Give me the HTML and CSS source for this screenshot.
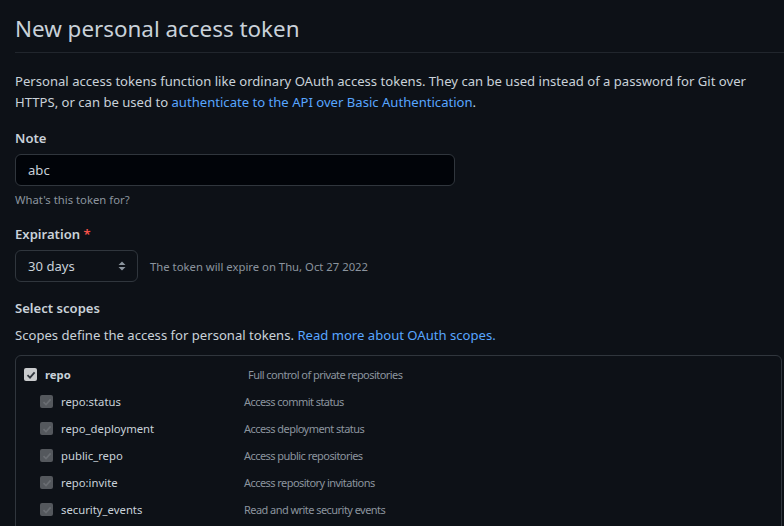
FILE: index.html
```html
<!DOCTYPE html>
<html>
<head>
<meta charset="utf-8">
<link rel="stylesheet" href="styles.css">
</head>
<body>
<div class="page">
  <h1 class="title">New personal access token</h1>
  <p class="intro">Personal access tokens function like ordinary OAuth access tokens. They can be used instead of a password for Git over HTTPS, or can be used to <a class="link">authenticate to the API over Basic Authentication</a>.</p>

  <div class="field">
    <div class="label">Note</div>
    <div class="input">abc</div>
    <div class="note">What's this token for?</div>
  </div>

  <div class="field field-exp">
    <div class="label">Expiration <span class="req">*</span></div>
    <div class="exp-row">
      <div class="select">
        <span>30 days</span>
        <svg class="updown" width="8" height="12" viewBox="0 0 8 12"><path d="M4 1.5 L7.5 5 H0.5 Z M4 10.5 L7.5 7 H0.5 Z" fill="#8b949e"/></svg>
      </div>
      <span class="exp-note">The token will expire on Thu, Oct 27 2022</span>
    </div>
  </div>

  <div class="label label-scopes">Select scopes</div>
  <p class="scopes-desc">Scopes define the access for personal tokens. <a class="link">Read more about OAuth scopes.</a></p>

  <div class="scopes">
    <div class="row row-top">
      <div class="name"><span class="cb cb-on"><svg width="10" height="10" viewBox="0 0 10 10"><path d="M1.5 5.2 L4 7.6 L8.6 2.4" fill="none" stroke="#30363d" stroke-width="1.8"/></svg></span><b>repo</b></div>
      <div class="desc">Full control of private repositories</div>
    </div>
    <div class="row row-sub">
      <div class="name"><span class="cb cb-dis"><svg width="10" height="10" viewBox="0 0 10 10"><path d="M1.5 5.2 L4 7.6 L8.6 2.4" fill="none" stroke="#6a6e73" stroke-width="1.6"/></svg></span>repo:status</div>
      <div class="desc">Access commit status</div>
    </div>
    <div class="row row-sub">
      <div class="name"><span class="cb cb-dis"><svg width="10" height="10" viewBox="0 0 10 10"><path d="M1.5 5.2 L4 7.6 L8.6 2.4" fill="none" stroke="#6a6e73" stroke-width="1.6"/></svg></span>repo_deployment</div>
      <div class="desc">Access deployment status</div>
    </div>
    <div class="row row-sub">
      <div class="name"><span class="cb cb-dis"><svg width="10" height="10" viewBox="0 0 10 10"><path d="M1.5 5.2 L4 7.6 L8.6 2.4" fill="none" stroke="#6a6e73" stroke-width="1.6"/></svg></span>public_repo</div>
      <div class="desc">Access public repositories</div>
    </div>
    <div class="row row-sub">
      <div class="name"><span class="cb cb-dis"><svg width="10" height="10" viewBox="0 0 10 10"><path d="M1.5 5.2 L4 7.6 L8.6 2.4" fill="none" stroke="#6a6e73" stroke-width="1.6"/></svg></span>repo:invite</div>
      <div class="desc">Access repository invitations</div>
    </div>
    <div class="row row-sub">
      <div class="name"><span class="cb cb-dis"><svg width="10" height="10" viewBox="0 0 10 10"><path d="M1.5 5.2 L4 7.6 L8.6 2.4" fill="none" stroke="#6a6e73" stroke-width="1.6"/></svg></span>security_events</div>
      <div class="desc">Read and write security events</div>
    </div>
  </div>
</div>
</body>
</html>
```
FILE: styles.css
```css
html, body {
  margin: 0;
  padding: 0;
  background: #0d1117;
  height: 100%;
  overflow: hidden;
}
body {
  font-family: "Noto Sans", "Liberation Sans", sans-serif;
  color: #c9d1d9;
  font-size: 13.1px;
}
.page {
  padding: 0 0 0 15px;
}
.title {
  margin: 0;
  padding-top: 13px;
  padding-bottom: 7px;
  font-size: 22.4px;
  font-weight: 400;
  line-height: 32px;
  border-bottom: 1px solid #21262d;
}
.intro {
  margin: 18px 30px 0 0;
  line-height: 21px;
}
.link {
  color: #58a6ff;
}
.field {
  margin-top: 15px;
}
.label {
  font-weight: 600;
  line-height: 21px;
}
.input {
  margin-top: 5px;
  width: 414px;
  height: 30px;
  line-height: 30px;
  padding: 0 12px;
  background: #010409;
  border: 1px solid #30363d;
  border-radius: 6px;
}
.note {
  margin-top: 5px;
  font-size: 11.3px;
  color: #8b949e;
  line-height: 18px;
}
.field-exp {
  margin-top: 15px;
}
.req {
  color: #f85149;
}
.exp-row {
  margin-top: 5px;
  display: flex;
  align-items: center;
  gap: 12px;
}
.select {
  width: 97px;
  height: 30px;
  padding: 0 12px;
  border: 1px solid #30363d;
  border-radius: 6px;
  display: flex;
  align-items: center;
  justify-content: space-between;
}
.updown {
  margin-right: -1px;
}
.exp-note {
  font-size: 11.3px;
  color: #8b949e;
}
.label-scopes {
  margin-top: 16px;
}
.scopes-desc {
  margin: 6px 0 0;
  line-height: 21px;
}
.scopes {
  margin: 9px 2px 0 0;
  border: 1px solid #30363d;
  border-radius: 6px;
  padding: 5px 8px 0;
  font-size: 11.3px;
  height: 170px;
}
.row {
  display: flex;
  align-items: center;
  height: 27px;
}
.name {
  display: flex;
  align-items: center;
}
.row-top .name {
  width: 224px;
}
.row-sub .name {
  width: 204px;
  padding-left: 16px;
}
.cb {
  width: 13px;
  height: 13px;
  border-radius: 2px;
  margin-right: 8px;
  display: flex;
  align-items: center;
  justify-content: center;
}
.cb-on {
  background: #c9cbcd;
}
.cb-dis {
  background: #54585d;
}
.row-top b {
  font-weight: 700;
}
.desc {
  color: #8b949e;
  font-size: 11px;
  letter-spacing: -0.55px;
}
```
